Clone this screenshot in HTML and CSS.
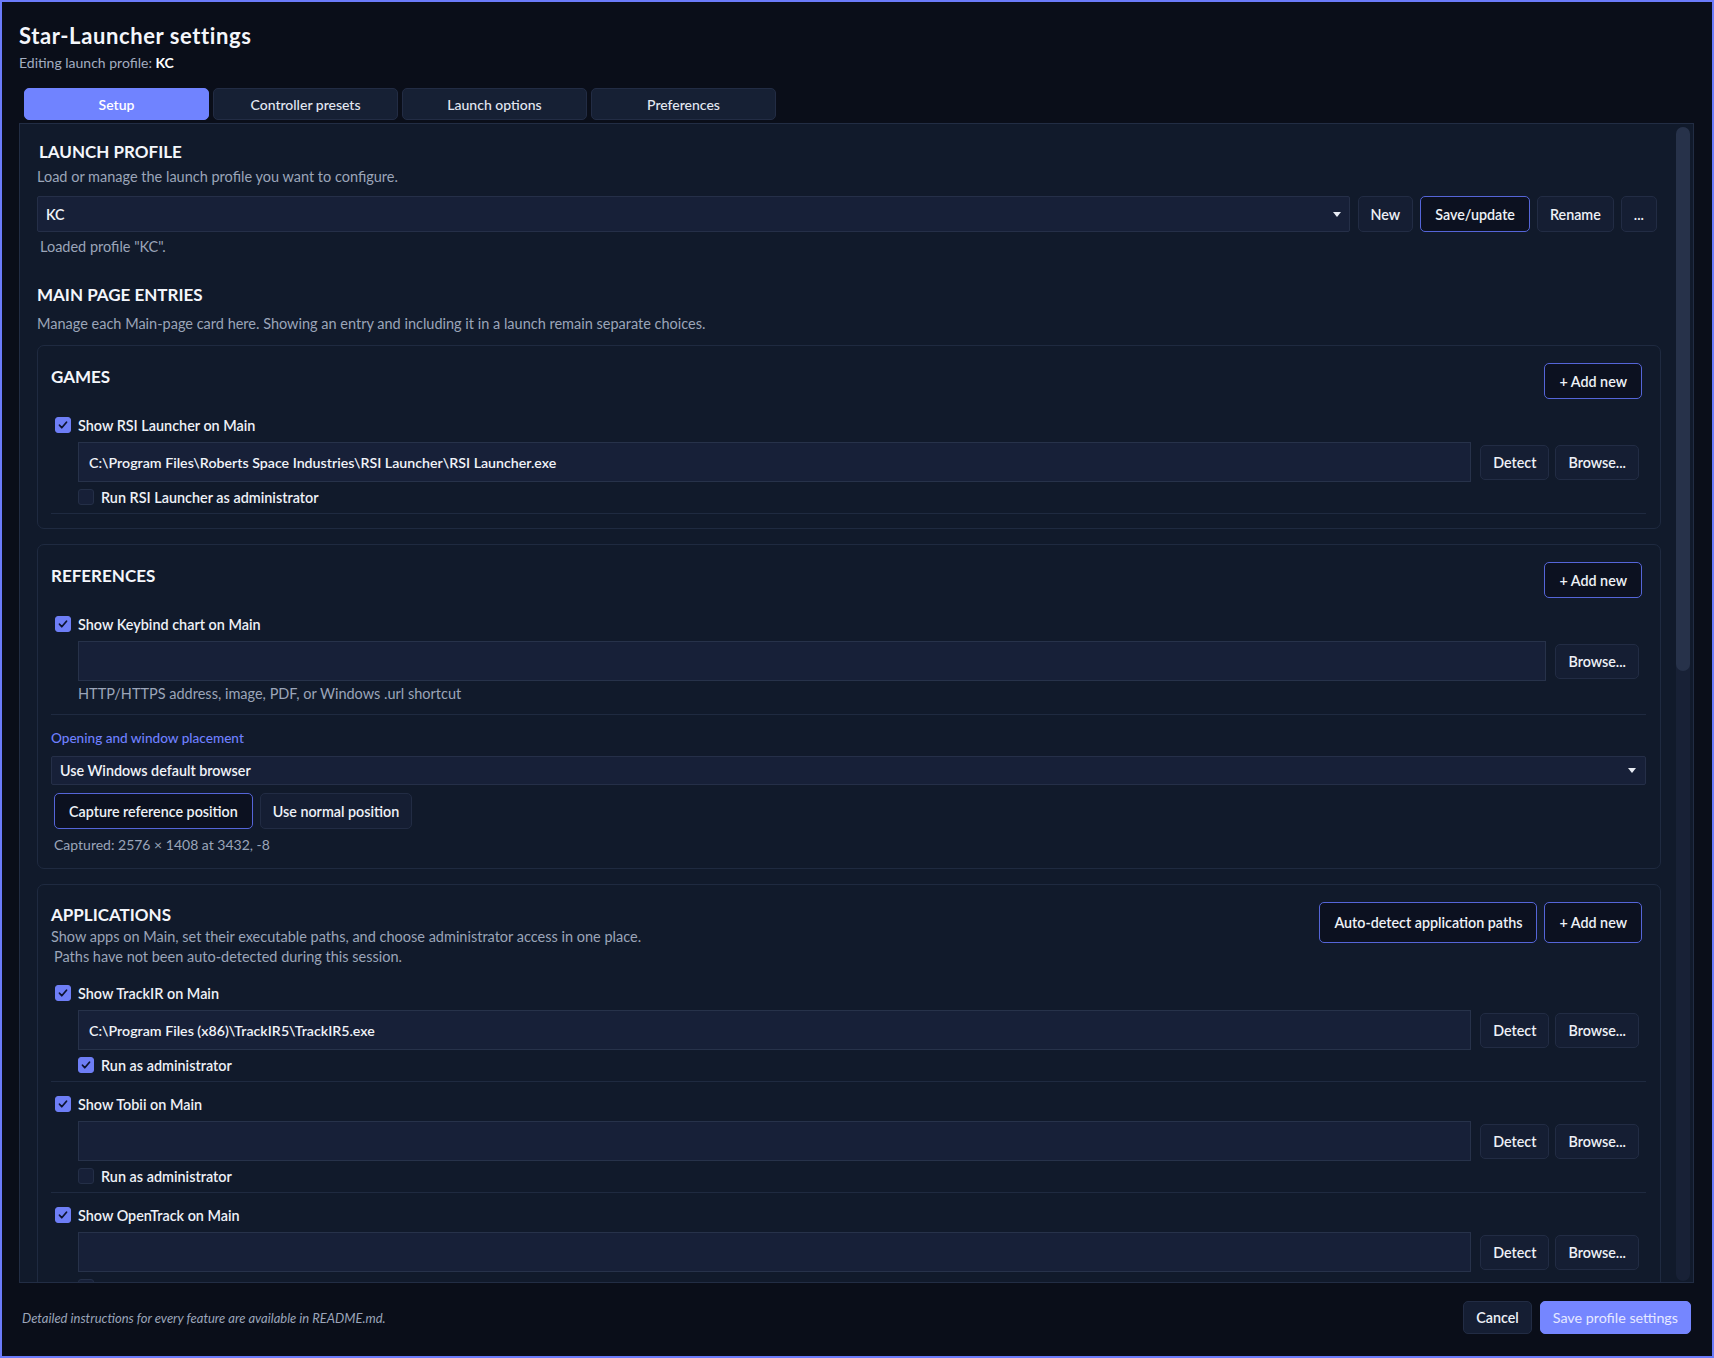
FILE: index.html
```html
<!DOCTYPE html>
<html lang="en">
<head>
<meta charset="utf-8">
<title>Star-Launcher settings</title>
<link rel="stylesheet" href="styles.css">
</head>
<body>
<div class="app">
  <header class="head">
    <h1 class="title">Star-Launcher settings</h1>
    <p class="subtitle">Editing launch profile: <strong>KC</strong></p>
  </header>

  <nav class="tabs">
    <button class="tab active">Setup</button>
    <button class="tab">Controller presets</button>
    <button class="tab">Launch options</button>
    <button class="tab">Preferences</button>
  </nav>

  <main class="panel">
    <div class="panel-body">
      <section class="section">
        <h2 class="section-title indent">LAUNCH PROFILE</h2>
        <p class="muted lead">Load or manage the launch profile you want to configure.</p>
        <div class="profile-row">
          <div class="select big"><span>KC</span><span class="caret"></span></div>
          <button class="btn">New</button>
          <button class="btn accent">Save/update</button>
          <button class="btn">Rename</button>
          <button class="btn">...</button>
        </div>
        <p class="muted status">Loaded profile "KC".</p>
      </section>

      <section class="section entries">
        <h2 class="section-title">MAIN PAGE ENTRIES</h2>
        <p class="muted lead">Manage each Main-page card here. Showing an entry and including it in a launch remain separate choices.</p>

        <div class="card">
          <div class="card-head">
            <h3 class="card-title">GAMES</h3>
            <button class="btn accent">+ Add new</button>
          </div>
          <div class="entry">
            <label class="check"><span class="box on"><svg viewBox="0 0 16 16"><path d="M4 8.3l2.6 2.8L12 4.8"/></svg></span>Show RSI Launcher on Main</label>
            <div class="path-row">
              <div class="field">C:\Program Files\Roberts Space Industries\RSI Launcher\RSI Launcher.exe</div>
              <button class="btn">Detect</button>
              <button class="btn">Browse...</button>
            </div>
            <label class="check sub"><span class="box"></span>Run RSI Launcher as administrator</label>
          </div>
        </div>

        <div class="card">
          <div class="card-head">
            <h3 class="card-title">REFERENCES</h3>
            <button class="btn accent">+ Add new</button>
          </div>
          <div class="entry">
            <label class="check"><span class="box on"><svg viewBox="0 0 16 16"><path d="M4 8.3l2.6 2.8L12 4.8"/></svg></span>Show Keybind chart on Main</label>
            <div class="path-row">
              <div class="field"></div>
              <button class="btn">Browse...</button>
            </div>
            <p class="muted hint">HTTP/HTTPS address, image, PDF, or Windows .url shortcut</p>
          </div>
          <div class="placement">
            <p class="placement-label">Opening and window placement</p>
            <div class="select small"><span>Use Windows default browser</span><span class="caret"></span></div>
            <div class="placement-actions">
              <button class="btn accent">Capture reference position</button>
              <button class="btn">Use normal position</button>
            </div>
            <p class="muted captured">Captured: 2576 × 1408 at 3432, -8</p>
          </div>
        </div>

        <div class="card">
          <div class="card-head">
            <div class="head-text">
              <h3 class="card-title">APPLICATIONS</h3>
              <p class="muted desc">Show apps on Main, set their executable paths, and choose administrator access in one place.</p>
              <p class="muted desc note">Paths have not been auto-detected during this session.</p>
            </div>
            <div class="head-actions">
              <button class="btn accent">Auto-detect application paths</button>
              <button class="btn accent">+ Add new</button>
            </div>
          </div>
          <div class="entry">
            <label class="check"><span class="box on"><svg viewBox="0 0 16 16"><path d="M4 8.3l2.6 2.8L12 4.8"/></svg></span>Show TrackIR on Main</label>
            <div class="path-row">
              <div class="field">C:\Program Files (x86)\TrackIR5\TrackIR5.exe</div>
              <button class="btn">Detect</button>
              <button class="btn">Browse...</button>
            </div>
            <label class="check sub"><span class="box on"><svg viewBox="0 0 16 16"><path d="M4 8.3l2.6 2.8L12 4.8"/></svg></span>Run as administrator</label>
          </div>
          <div class="entry">
            <label class="check"><span class="box on"><svg viewBox="0 0 16 16"><path d="M4 8.3l2.6 2.8L12 4.8"/></svg></span>Show Tobii on Main</label>
            <div class="path-row">
              <div class="field"></div>
              <button class="btn">Detect</button>
              <button class="btn">Browse...</button>
            </div>
            <label class="check sub"><span class="box"></span>Run as administrator</label>
          </div>
          <div class="entry">
            <label class="check"><span class="box on"><svg viewBox="0 0 16 16"><path d="M4 8.3l2.6 2.8L12 4.8"/></svg></span>Show OpenTrack on Main</label>
            <div class="path-row">
              <div class="field"></div>
              <button class="btn">Detect</button>
              <button class="btn">Browse...</button>
            </div>
            <label class="check sub"><span class="box"></span>Run as administrator</label>
          </div>
        </div>
      </section>
    </div>
    <div class="scrollbar"><div class="thumb"></div></div>
  </main>

  <footer class="foot">
    <p class="foot-note">Detailed instructions for every feature are available in README.md.</p>
    <div class="foot-actions">
      <button class="btn small">Cancel</button>
      <button class="btn small primary">Save profile settings</button>
    </div>
  </footer>
</div>
</body>
</html>
```

FILE: styles.css
```css
* { box-sizing: border-box; }

html, body {
  margin: 0;
  padding: 0;
}

body {
  background: #0a0e19;
  color: #e8ecf4;
  font-family: Lato, "Noto Sans", "DejaVu Sans", sans-serif;
}

button {
  font-family: inherit;
  cursor: pointer;
}

.app {
  height: 1358px;
  border: 2px solid #6b7bfa;
  display: flex;
  flex-direction: column;
  padding: 22px 18px 0 17px;
  background: #0a0e19;
}

/* header */
.title {
  margin: 0;
  font-size: 22px;
  line-height: 24px;
  font-weight: 700;
  letter-spacing: 0.6px;
  color: #f4f6fb;
}

.subtitle {
  margin: 6px 0 0;
  font-size: 14px;
  line-height: 18px;
  color: #a3adc0;
}

.subtitle strong {
  color: #ffffff;
  font-weight: 700;
}

/* tabs */
.tabs {
  display: flex;
  gap: 4px;
  margin: 16px 0 3px 5px;
}

.tab {
  width: 185px;
  height: 32px;
  border: 1px solid #222c44;
  background: #162034;
  color: #e3e8f2;
  font-size: 14px;
  font-weight: 500;
  border-radius: 5px;
  padding: 0;
}

.tab.active {
  background: #7083ff;
  border-color: #7083ff;
  color: #ffffff;
  font-weight: 600;
}

/* panel */
.panel {
  flex: 1;
  min-height: 0;
  display: flex;
  overflow: hidden;
  background: #111a2b;
  border: 1px solid #222d44;
}

.panel-body {
  flex: 1;
  min-width: 0;
  overflow: hidden;
  padding: 18px 15px 0 17px;
}

.scrollbar {
  flex: none;
  width: 14px;
  margin: 3px 3px 1px 0;
  background: #182136;
  border-radius: 7px;
}

.thumb {
  height: 544px;
  background: #27324a;
  border-radius: 7px;
}

.section-title {
  margin: 0;
  font-size: 17px;
  line-height: 20px;
  font-weight: 700;
  color: #f4f6fb;
}

.section-title.indent {
  padding-left: 2px;
}

.muted {
  color: #9ba5b9;
  font-size: 14.5px;
  line-height: 18px;
  margin: 0;
}

.lead {
  margin-top: 6px;
}

.profile-row {
  display: flex;
  align-items: center;
  gap: 7px;
  margin-top: 10px;
  padding-right: 4px;
}

.select {
  display: flex;
  align-items: center;
  justify-content: space-between;
  background: #172038;
  border: 1px solid #252f48;
  border-radius: 2px;
  font-size: 14.3px;
  font-weight: 600;
  color: #f0f3f9;
}

.select.big {
  flex: 1;
  height: 36px;
  margin-right: 1px;
  padding: 0 8px 0 8px;
}

.select.small {
  height: 29px;
  margin-top: 9px;
  padding: 0 9px 0 8px;
}

.caret {
  width: 0;
  height: 0;
  border-left: 4px solid transparent;
  border-right: 4px solid transparent;
  border-top: 5px solid #e8ecf4;
}

.status {
  margin-top: 6px;
  padding-left: 3px;
}

.entries {
  margin-top: 29px;
}

.entries .lead {
  margin-top: 10px;
}

/* buttons */
.btn {
  height: 36px;
  padding: 0 12px;
  border: 1px solid #222c44;
  background: #151e33;
  color: #eef1f7;
  font-size: 14.3px;
  font-weight: 600;
  border-radius: 5px;
  white-space: nowrap;
  flex: none;
}

.btn.accent {
  padding: 0 14px;
  background: #0c1120;
  border-color: #5565d8;
}

.btn.small {
  height: 33px;
}

.btn.primary {
  background: #7586ff;
  border-color: #7586ff;
  color: #e6e9ff;
  font-weight: 400;
}

/* cards */
.card {
  border: 1px solid #1f2a40;
  border-radius: 7px;
  padding: 17px 14px 14px 13px;
  margin-top: 15px;
}

.lead + .card {
  margin-top: 12px;
}

.card-head {
  display: flex;
  justify-content: space-between;
  align-items: flex-start;
  padding-right: 4px;
  margin-bottom: 4px;
}

.card-title {
  margin: 4px 0 0;
  font-size: 17px;
  line-height: 20px;
  font-weight: 700;
  color: #f4f6fb;
}

.head-text .card-title {
  margin-top: 3px;
}

.desc {
  line-height: 20px;
}

.card-title + .desc {
  margin-top: 2px;
}

.desc.note {
  padding-left: 3px;
}

.head-actions {
  display: flex;
  gap: 7px;
}

.head-actions .btn {
  height: 41px;
}

.entry {
  padding: 12px 7px 6px 4px;
  border-bottom: 1px solid #1f2a40;
}

.check {
  display: flex;
  align-items: center;
  height: 20px;
  font-size: 14.4px;
  font-weight: 600;
  color: #eef1f7;
}

.check.sub {
  margin: 5px 0 0 23px;
}

.box {
  width: 16px;
  height: 16px;
  flex: none;
  margin-right: 7px;
  border-radius: 3px;
  background: #172038;
  border: 1px solid #242f47;
  display: flex;
  align-items: center;
  justify-content: center;
}

.box.on {
  background: #6e7ef6;
  border-color: #6e7ef6;
}

.box svg {
  width: 16px;
  height: 16px;
  fill: none;
  stroke: #0d1330;
  stroke-width: 2;
  stroke-linecap: round;
  stroke-linejoin: round;
}

.path-row {
  display: flex;
  align-items: center;
  margin: 7px 0 0 23px;
}

.field {
  flex: 1;
  height: 40px;
  background: #172038;
  border: 1px solid #27324a;
  padding: 0 10px;
  display: flex;
  align-items: center;
  font-size: 14.2px;
  font-weight: 600;
  color: #f0f3f9;
  margin-right: 9px;
}

.path-row .btn {
  height: 35px;
}

.path-row .btn + .btn {
  margin-left: 6px;
}

.hint {
  margin: 4px 0 5px 23px;
}

.placement {
  padding-top: 14px;
}

.placement-label {
  margin: 0;
  font-size: 13.6px;
  line-height: 18px;
  font-weight: 500;
  color: #6f80ff;
}

.placement-actions {
  display: flex;
  gap: 7px;
  margin-top: 8px;
  padding-left: 3px;
}

.captured {
  margin-top: 7px;
  padding-left: 3px;
  font-size: 14px;
}

/* footer */
.foot {
  height: 73px;
  flex: none;
  display: flex;
  align-items: center;
  justify-content: space-between;
  padding: 0 3px 4px 3px;
}

.foot-note {
  margin: 0;
  font-size: 13px;
  line-height: 18px;
  font-style: italic;
  color: #9ba5b9;
}

.foot-actions {
  display: flex;
  gap: 8px;
}
```
